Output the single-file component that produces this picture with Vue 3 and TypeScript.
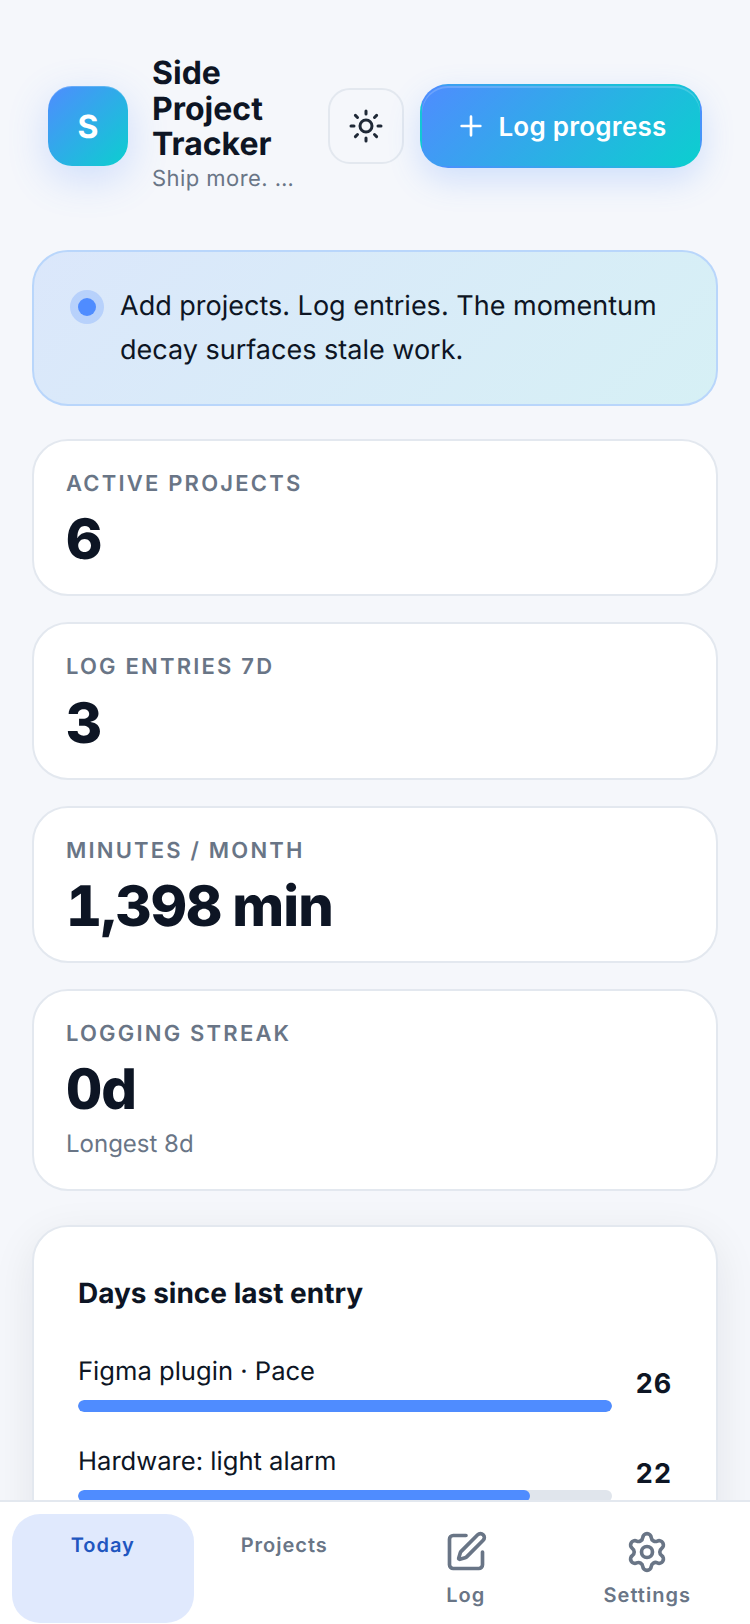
<script setup lang="ts">
import { computed } from 'vue'

interface Stat {
  label: string
  value: string
  note?: string
}

interface StaleRow {
  name: string
  days: number
}

const stats: Stat[] = [
  { label: 'Active projects', value: '6' },
  { label: 'Log entries 7d', value: '3' },
  { label: 'Minutes / month', value: '1,398 min' },
  { label: 'Logging streak', value: '0d', note: 'Longest 8d' },
]

const staleRows: StaleRow[] = [
  { name: 'Figma plugin · Pace', days: 26 },
  { name: 'Hardware: light alarm', days: 22 },
]

const maxDays = computed(() => Math.max(...staleRows.map((r) => r.days)))
</script>

<template>
  <div class="shell">
    <main class="content">
      <header class="top">
        <div class="brand">
          <div class="logo">S</div>
          <div class="brand-text">
            <h1>Side Project Tracker</h1>
            <p>Ship more. …</p>
          </div>
        </div>
        <div class="actions">
          <button class="theme-btn" type="button" aria-label="Theme">
            <svg width="36" height="36" viewBox="0 0 24 24" fill="none" stroke="currentColor" stroke-width="2" stroke-linecap="round" stroke-linejoin="round">
              <circle cx="12" cy="12" r="4" />
              <path d="M12 2v2M12 20v2M4.93 4.93l1.41 1.41M17.66 17.66l1.41 1.41M2 12h2M20 12h2M6.34 17.66l-1.41 1.41M19.07 4.93l-1.41 1.41" />
            </svg>
          </button>
          <button class="log-btn" type="button">
            <svg width="32" height="32" viewBox="0 0 24 24" fill="none" stroke="currentColor" stroke-width="2" stroke-linecap="round" stroke-linejoin="round">
              <path d="M5 12h14M12 5v14" />
            </svg>
            <span>Log progress</span>
          </button>
        </div>
      </header>

      <section class="banner">
        <span class="banner-dot"></span>
        <p>Add projects. Log entries. The momentum decay surfaces stale work.</p>
      </section>

      <section class="stats">
        <div v-for="stat in stats" :key="stat.label" class="stat">
          <div class="stat-label">{{ stat.label }}</div>
          <div class="stat-value">{{ stat.value }}</div>
          <div v-if="stat.note" class="stat-note">{{ stat.note }}</div>
        </div>
      </section>

      <section class="panel">
        <h2>Days since last entry</h2>
        <div v-for="row in staleRows" :key="row.name" class="stale-row">
          <div class="stale-main">
            <div class="stale-name">{{ row.name }}</div>
            <div class="track">
              <div class="fill" :style="{ width: (row.days / maxDays) * 100 + '%' }"></div>
            </div>
          </div>
          <div class="stale-days">{{ row.days }}</div>
        </div>
      </section>
    </main>

    <nav class="tabs">
      <a class="tab active">
        <span>Today</span>
      </a>
      <a class="tab">
        <span>Projects</span>
      </a>
      <a class="tab">
        <svg width="44" height="44" viewBox="0 0 24 24" fill="none" stroke="currentColor" stroke-width="2" stroke-linecap="round" stroke-linejoin="round">
          <path d="M12 3H5a2 2 0 0 0-2 2v14a2 2 0 0 0 2 2h14a2 2 0 0 0 2-2v-7" />
          <path d="M18.375 2.625a1 1 0 0 1 3 3l-9.013 9.014a2 2 0 0 1-.853.505l-2.873.84a.5.5 0 0 1-.62-.62l.84-2.873a2 2 0 0 1 .506-.852z" />
        </svg>
        <span>Log</span>
      </a>
      <a class="tab">
        <svg width="44" height="44" viewBox="0 0 24 24" fill="none" stroke="currentColor" stroke-width="2" stroke-linecap="round" stroke-linejoin="round">
          <path d="M9.671 4.136a2.34 2.34 0 0 1 4.659 0 2.34 2.34 0 0 0 3.319 1.915 2.34 2.34 0 0 1 2.33 4.033 2.34 2.34 0 0 0 0 3.831 2.34 2.34 0 0 1-2.33 4.033 2.34 2.34 0 0 0-3.319 1.915 2.34 2.34 0 0 1-4.659 0 2.34 2.34 0 0 0-3.32-1.915 2.34 2.34 0 0 1-2.33-4.033 2.34 2.34 0 0 0 0-3.831A2.34 2.34 0 0 1 6.35 6.051a2.34 2.34 0 0 0 3.319-1.915" />
          <circle cx="12" cy="12" r="3" />
        </svg>
        <span>Settings</span>
      </a>
    </nav>
  </div>
</template>

<style>
html,
body {
  margin: 0;
  background: #f5f7fb;
}
</style>

<style scoped>
.shell {
  height: 100vh;
  display: flex;
  flex-direction: column;
  overflow: hidden;
  font-family: Inter, "Noto Sans", sans-serif;
  text-rendering: geometricPrecision;
  color: #0d1524;
  background: #f5f7fb;
}

.content {
  flex: 1;
  min-height: 0;
  overflow: hidden;
  padding: 54px 32px 0;
}

.top {
  display: flex;
  align-items: center;
  gap: 32px;
  padding: 0 16px;
  margin-bottom: 52px;
}

.brand {
  flex: 1;
  min-width: 0;
  display: flex;
  align-items: center;
  gap: 24px;
}

.logo {
  flex: none;
  width: 80px;
  height: 80px;
  border-radius: 24px;
  display: flex;
  align-items: center;
  justify-content: center;
  color: #fff;
  font-size: 32px;
  font-weight: 700;
  background: linear-gradient(135deg, #4f8cff, #0bcfcf);
  box-shadow: 0 12px 40px rgba(79, 140, 255, 0.24), inset 0 1px 0 rgba(255, 255, 255, 0.2);
}

.brand-text {
  min-width: 0;
  padding-bottom: 3px;
}

.brand-text h1 {
  margin: 1px 0 0;
  font-size: 32px;
  line-height: 35.67px;
  font-weight: 700;
}

.brand-text p {
  margin: 1px 0 0;
  font-size: 22px;
  line-height: 32px;
  letter-spacing: 0.44px;
  color: #697586;
  white-space: nowrap;
}

.actions {
  flex: none;
  display: flex;
  align-items: center;
  gap: 16px;
}

.theme-btn {
  width: 76px;
  height: 76px;
  box-sizing: border-box;
  padding: 0;
  border: 2px solid #e3e8ef;
  border-radius: 22px;
  background: transparent;
  color: #1f2937;
  display: flex;
  align-items: center;
  justify-content: center;
}

.log-btn {
  width: 282px;
  height: 84px;
  box-sizing: border-box;
  border: 2px solid transparent;
  border-radius: 28px;
  display: flex;
  align-items: center;
  justify-content: center;
  gap: 11px;
  padding: 0;
  color: #fff;
  font-family: inherit;
  font-size: 26px;
  font-weight: 600;
  letter-spacing: 0.26px;
  background: linear-gradient(135deg, #4f8cff, #0bcfcf);
  box-shadow: 0 12px 32px rgba(79, 140, 255, 0.22), inset 0 2px 0 rgba(255, 255, 255, 0.18);
}

.banner {
  display: flex;
  align-items: flex-start;
  gap: 24px;
  box-sizing: border-box;
  padding: 32px 44px;
  border: 2px solid #b9d6fb;
  border-radius: 36px;
  background: linear-gradient(135deg, #dbe7fb, #d6f0f5);
  margin-bottom: 33px;
}

.banner-dot {
  flex: none;
  width: 18px;
  height: 18px;
  margin-top: 14px;
  border-radius: 50%;
  background: #4f8cff;
  box-shadow: 0 0 0 8px rgba(79, 140, 255, 0.25);
}

.banner p {
  margin: 0;
  font-size: 27px;
  line-height: 44px;
}

.stats {
  display: flex;
  flex-direction: column;
  gap: 26px;
}

.stat {
  box-sizing: border-box;
  padding: 28px 32px;
  border: 2px solid #e3e8ef;
  border-radius: 36px;
  background: #fff;
}

.stat-label {
  font-size: 22px;
  line-height: 30px;
  font-weight: 600;
  letter-spacing: 2.2px;
  text-transform: uppercase;
  color: #697586;
}

.stat-value {
  margin: 12.3px 0 -2px;
  font-size: 56px;
  line-height: 57px;
  font-weight: 800;
  letter-spacing: -0.9px;
  word-spacing: -3px;
  font-variant-numeric: tabular-nums;
}

.stat-note {
  margin-top: 10.7px;
  font-size: 24px;
  line-height: 34px;
  color: #697586;
}

.panel {
  box-sizing: border-box;
  margin-top: 34px;
  padding: 44px;
  border: 2px solid #e3e8ef;
  border-radius: 36px;
  background: #fff;
  box-shadow: 0 12px 44px rgba(15, 23, 42, 0.08);
}

.panel h2 {
  margin: 0 0 37px;
  font-size: 28px;
  line-height: 44px;
  font-weight: 700;
}

.stale-row {
  display: flex;
  align-items: center;
  margin-bottom: 30px;
}

.stale-main {
  flex: 1;
  min-width: 0;
}

.stale-name {
  font-size: 25.6px;
  line-height: 40px;
  margin-bottom: 8px;
}

.stale-days {
  flex: none;
  width: 60px;
  padding-top: 3px;
  text-align: right;
  font-size: 27px;
  font-weight: 700;
  letter-spacing: 0.8px;
  font-variant-numeric: tabular-nums;
}

.track {
  height: 12px;
  border-radius: 6px;
  background: #e0e5ec;
  overflow: hidden;
}

.fill {
  height: 100%;
  border-radius: 6px;
  background: #4f8cff;
}

.tabs {
  flex: none;
  height: 124px;
  box-sizing: border-box;
  border-top: 2px solid #e3e8ef;
  background: #fff;
  padding: 12px 12px 1px;
  display: grid;
  grid-template-columns: repeat(4, 1fr);
}

.tab {
  display: flex;
  flex-direction: column;
  align-items: center;
  padding-top: 16px;
  border-radius: 28px;
  color: #697586;
  font-size: 20px;
  line-height: 30px;
  font-weight: 600;
  letter-spacing: 1px;
}

.tab svg {
  margin-bottom: 6px;
}

.tab.active {
  background: #e0e9fd;
  color: #1f56c0;
}
</style>
